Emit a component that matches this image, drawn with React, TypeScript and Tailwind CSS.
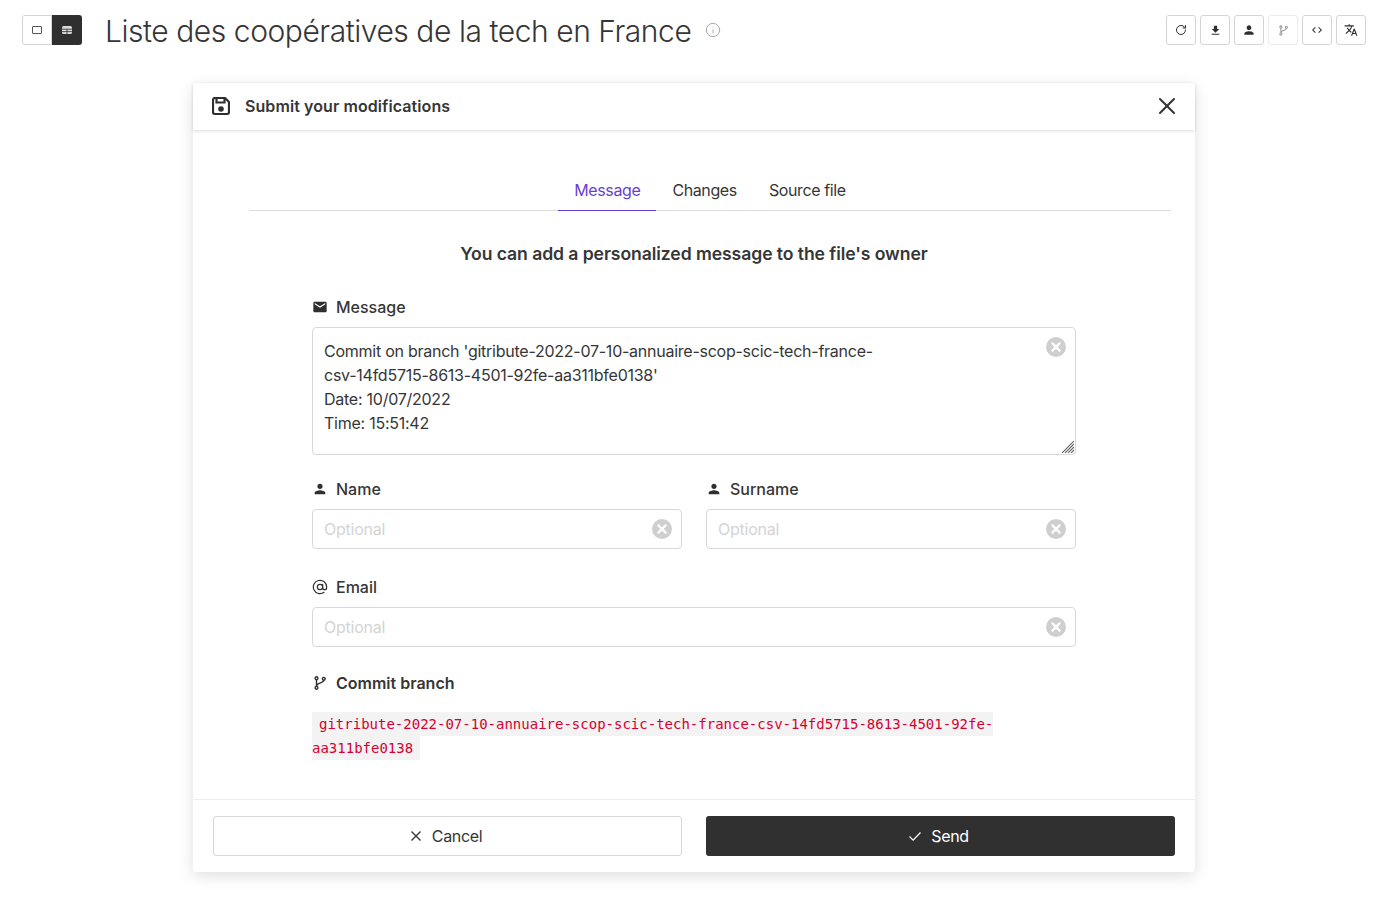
import { RotateCw, X, AtSign, Info } from 'lucide-react';
import { MdEmail, MdPerson, MdFileDownload, MdCode, MdTranslate } from 'react-icons/md';

function ToolButton({ children, faded }: { children: React.ReactNode; faded?: boolean }) {
  return (
    <button
      className={`w-[30px] h-[30px] flex items-center justify-center rounded-[3px] border ${
        faded ? 'border-[#ececec] text-[#999]' : 'border-[#d5d5d5] text-[#2f2f2f]'
      }`}
    >
      {children}
    </button>
  );
}

function ClearIcon({ className }: { className: string }) {
  return (
    <svg viewBox="0 0 20 20" className={`absolute w-5 h-5 ${className}`}>
      <circle cx="10" cy="10" r="10" fill="#cfcfcf" />
      <path d="M6.4 6.4l7.2 7.2M13.6 6.4l-7.2 7.2" stroke="#fff" strokeWidth="2.2" strokeLinecap="round" />
    </svg>
  );
}

function BranchIcon({ className }: { className: string }) {
  return (
    <svg viewBox="0 0 12 14" className={className} fill="none" stroke="currentColor" strokeWidth="1.4">
      <circle cx="2.5" cy="2.2" r="1.4" />
      <circle cx="2.5" cy="11.8" r="1.4" />
      <circle cx="9.8" cy="2.8" r="1.4" />
      <path d="M2.5 3.6v6.8M9.8 4.2c0 3-7.3 2.2-7.3 6" />
    </svg>
  );
}

function FieldLabel({ icon, children, strong }: { icon: React.ReactNode; children: React.ReactNode; strong?: boolean }) {
  return (
    <div className={`flex items-center h-6 text-base text-[#363636] ${strong ? 'font-semibold' : 'font-medium'}`}>
      <span className="w-4 h-4 mr-2 flex items-center justify-center text-[#2f2f2f]">{icon}</span>
      {children}
    </div>
  );
}

function OptionalInput() {
  return (
    <div className="relative mt-2">
      <input
        placeholder="Optional"
        className="w-full h-10 px-[11px] text-base tracking-[-0.25px] rounded-[4px] border border-[#d8d8d8] outline-none placeholder:text-[#d4d4d4]"
      />
      <ClearIcon className="right-[10px] top-[10px]" />
    </div>
  );
}

export default function App() {
  return (
    <div className="min-h-[909px] bg-white text-[#363636] font-['Inter',sans-serif]">
      <header className="h-[83px] flex items-start pt-[15px] pl-[22px] pr-[25px]">
        <div className="flex">
          <button className="w-[30px] h-[30px] flex items-center justify-center rounded-l-[3px] border border-[#d5d5d5]">
            <span className="w-[10px] h-[8px] border border-[#555] rounded-[1px]" />
          </button>
          <button className="w-[30px] h-[30px] flex items-center justify-center rounded-r-[3px] bg-[#2f2f2f]">
            <svg viewBox="0 0 10 8" className="w-[10px] h-[8px]">
              <rect width="10" height="8" rx="1.5" fill="#d8d8d8" />
              <path d="M0 3.2h10M0 5.6h10M5 3v5" stroke="#2f2f2f" strokeWidth="0.8" />
            </svg>
          </button>
        </div>
        <h1 className="ml-[24px] -translate-x-px text-[30px] leading-[32px] tracking-[-0.45px] font-light text-[#363636] whitespace-nowrap">
          Liste des coopératives de la tech en France
        </h1>
        <Info className="ml-[13px] mt-[7px] w-4 h-4 text-[#a8a8a8]" strokeWidth={1.5} />
        <div className="ml-auto flex gap-1">
          <ToolButton><RotateCw className="w-[12px] h-[12px]" strokeWidth={2} /></ToolButton>
          <ToolButton><MdFileDownload className="w-[13px] h-[13px]" /></ToolButton>
          <ToolButton><MdPerson className="w-[14px] h-[14px]" /></ToolButton>
          <ToolButton faded><BranchIcon className="w-[9px] h-[11px]" /></ToolButton>
          <ToolButton><MdCode className="w-[12px] h-[12px]" /></ToolButton>
          <ToolButton><MdTranslate className="w-[14px] h-[14px]" /></ToolButton>
        </div>
      </header>

      <section className="ml-[193px] w-[1002px] h-[789px] flex flex-col rounded-[4px] bg-white shadow-[0_4px_16px_rgba(0,0,0,0.13)]">
        <div className="h-[47px] flex items-center pl-[19px] pr-[14px] pb-[2px] shadow-[0_1px_3px_rgba(0,0,0,0.15)]">
          <svg viewBox="0 0 18 18" className="w-[18px] h-[18px] text-[#2f2f2f]" fill="none" stroke="currentColor" strokeWidth="2.2">
            <path d="M1 3a2 2 0 0 1 2-2h10l4 4v10a2 2 0 0 1-2 2H3a2 2 0 0 1-2-2z" />
            <path d="M4.5 1v4.5h8V1" />
            <circle cx="9" cy="12" r="2.8" fill="currentColor" stroke="none" />
          </svg>
          <span className="ml-[15px] text-base tracking-[0.08px] font-semibold text-[#363636]">Submit your modifications</span>
          <X className="ml-auto w-7 h-7 text-[#363636]" strokeWidth={1.75} />
        </div>

        <div className="flex-1 pl-14 pr-6 pt-10">
          <nav className="h-[41px] flex justify-center border-b border-[#dbdbdb] text-base tracking-[-0.38px]">
            <span className="h-[41px] px-4 flex items-center border-b border-[#6a3fd0] text-[#6a3fd0]">Message</span>
            <span className="h-[40px] px-4 flex items-center">Changes</span>
            <span className="h-[40px] px-4 flex items-center">Source file</span>
          </nav>
          <h2 className="mt-[30px] mr-[32px] text-center text-[17.6px] leading-[26px] tracking-[-0.08px] font-semibold text-[#363636]">
            You can add a personalized message to the file's owner
          </h2>

          <div className="mt-[28px] ml-[63px] w-[764px]">
            <FieldLabel icon={<MdEmail className="w-4 h-4" />}>Message</FieldLabel>
            <div className="relative mt-2">
              <textarea
                readOnly
                className="block w-full h-[128px] px-[11px] py-[11px] text-base leading-6 tracking-[-0.25px] rounded-[4px] border border-[#d8d8d8] outline-none resize-none text-[#363636]"
                value={"Commit on branch 'gitribute-2022-07-10-annuaire-scop-scic-tech-france-\ncsv-14fd5715-8613-4501-92fe-aa311bfe0138'\nDate: 10/07/2022\nTime: 15:51:42"}
              />
              <ClearIcon className="right-[10px] top-[10px]" />
              <svg viewBox="0 0 12 12" className="absolute right-[2px] bottom-[2px] w-3 h-3 text-[#666]" stroke="currentColor" strokeWidth="1.1">
                <path d="M0 12L12 0M3 12l9-9M6 12l6-6M9 12l3-3" />
              </svg>
            </div>

            <div className="mt-[22px] grid grid-cols-2 gap-6">
              <div>
                <FieldLabel icon={<MdPerson className="w-4 h-4" />}>Name</FieldLabel>
                <OptionalInput />
              </div>
              <div>
                <FieldLabel icon={<MdPerson className="w-4 h-4" />}>Surname</FieldLabel>
                <OptionalInput />
              </div>
            </div>

            <div className="mt-[26px]">
              <FieldLabel icon={<AtSign className="w-4 h-4" strokeWidth={1.75} />}>Email</FieldLabel>
              <OptionalInput />
            </div>

            <div className="mt-6">
              <FieldLabel strong icon={<BranchIcon className="w-[12px] h-[14px]" />}>Commit branch</FieldLabel>
            </div>
            <p className="mt-[17px] w-[700px] text-sm leading-6 text-[#d6002f] break-words">
              <code className="font-['DejaVu_Sans_Mono',monospace] bg-[#f3f3f3] py-[4px] px-[7px]">
                gitribute-2022-07-10-annuaire-scop-scic-tech-france-csv-14fd5715-8613-4501-92fe-aa311bfe0138
              </code>
            </p>
          </div>
        </div>

        <footer className="h-[73px] grid grid-cols-2 gap-6 items-start px-5 pt-4 border-t border-[#ededed]">
          <button className="h-10 flex items-center justify-center gap-[10px] pr-[3px] rounded-[3px] border border-[#d8d8d8] text-base tracking-[-0.35px] text-[#363636]">
            <svg viewBox="0 0 12 12" className="w-3 h-3" fill="none" stroke="currentColor" strokeWidth="1.4">
              <path d="M1.5 1.5l9 9M10.5 1.5l-9 9" />
            </svg>
            Cancel
          </button>
          <button className="h-10 flex items-center justify-center gap-[10px] pr-[3px] rounded-[3px] bg-[#303030] text-base tracking-[-0.35px] text-white">
            <svg viewBox="0 0 12 12" className="w-3 h-3" fill="none" stroke="currentColor" strokeWidth="1.3">
              <path d="M0.5 6.5l3.6 3.6L11.5 2.5" />
            </svg>
            Send
          </button>
        </footer>
      </section>
    </div>
  );
}
